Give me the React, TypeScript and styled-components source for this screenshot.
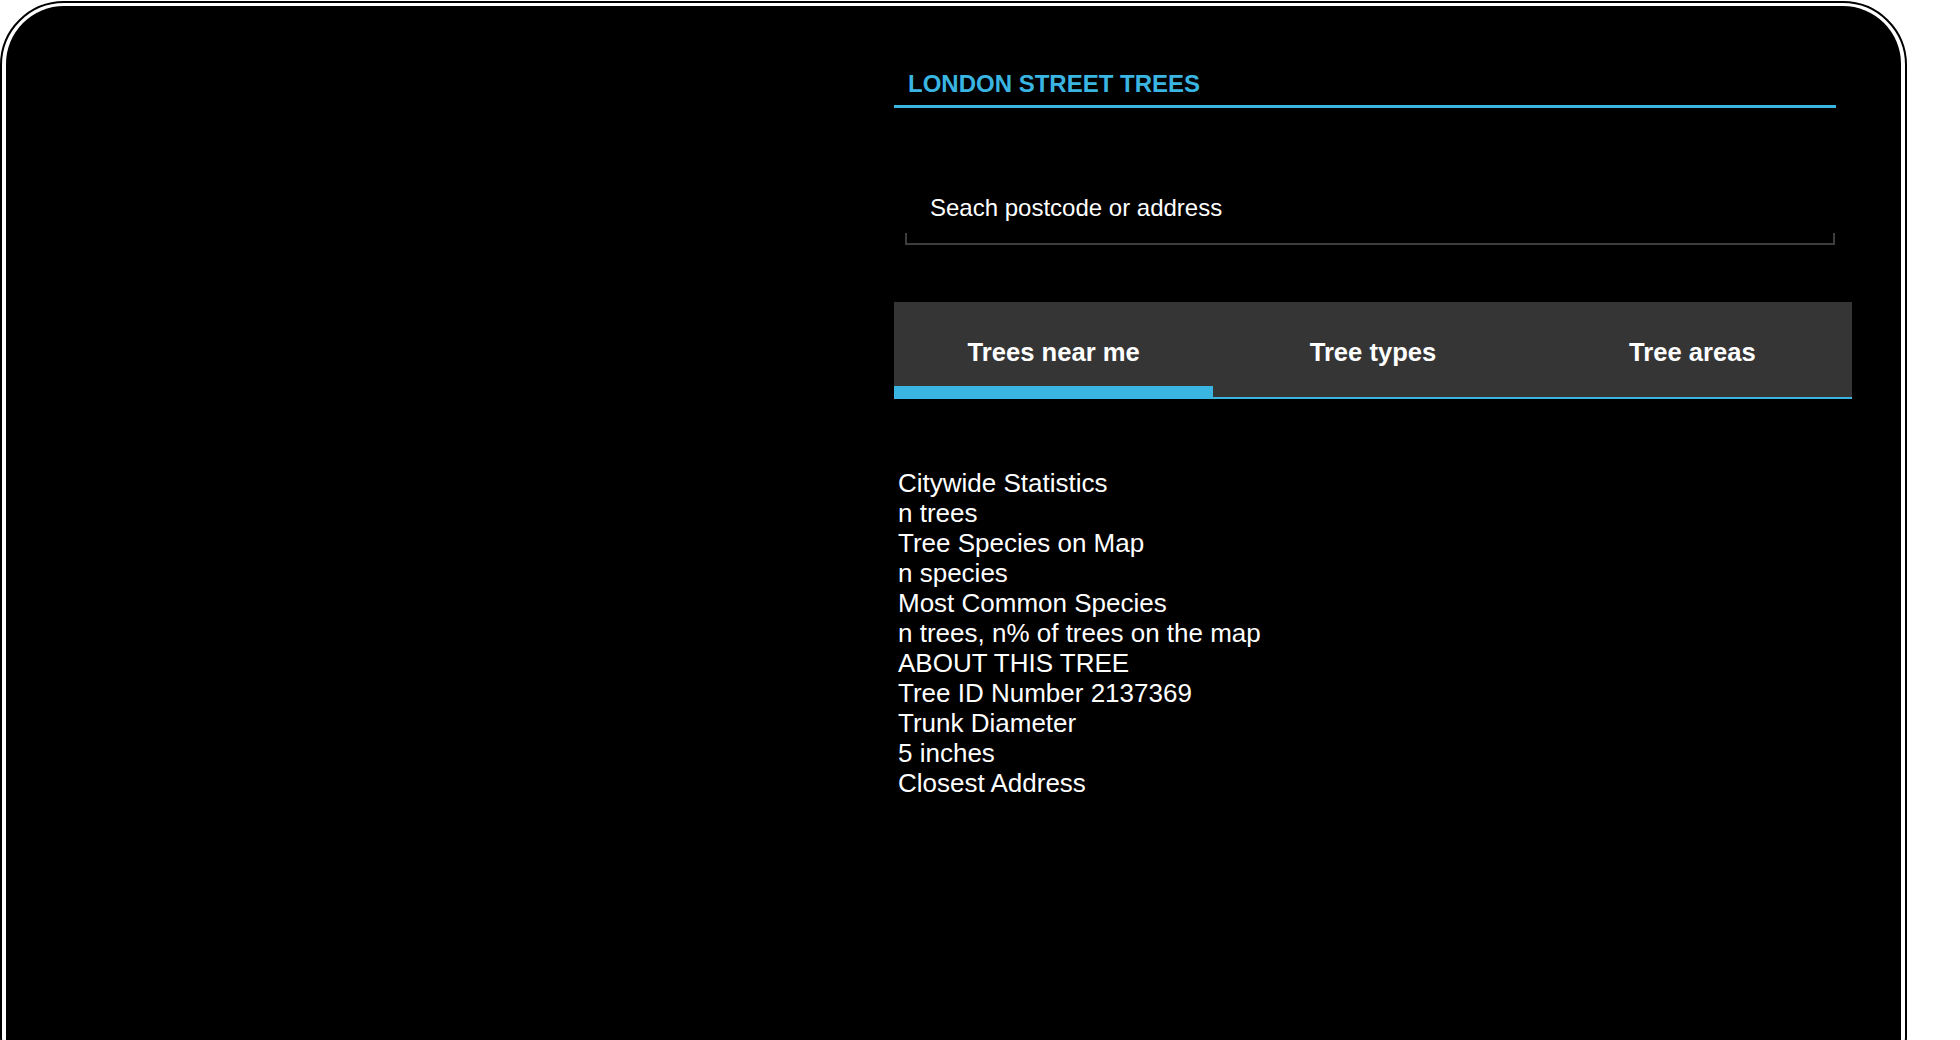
import styled, { createGlobalStyle } from 'styled-components'

const GlobalStyle = createGlobalStyle`
  html, body {
    margin: 0;
    padding: 0;
    background: #fff;
    overflow: hidden;
  }
  body {
    font-family: "Liberation Sans", Arial, sans-serif;
  }
`

const BLUE = '#3ab5e2'

const Device = styled.div`
  box-sizing: border-box;
  width: 1907px;
  height: 1100px;
  margin-top: 1px;
  padding: 3px 4px 0;
  border: 2px solid #000;
  border-radius: 64px;
  background: #fff;
`

const Screen = styled.div`
  height: 100%;
  background: #000;
  border-radius: 58px;
  display: grid;
  grid-template-columns: 888px 958px 1fr;
`

const MapArea = styled.div``

const Sidebar = styled.aside`
  padding-top: 64px;
  color: #fff;
`

const Title = styled.h1`
  margin: 0 16px 0 0;
  padding: 0 0 7px 14px;
  font-size: 24px;
  line-height: 28px;
  font-weight: 700;
  color: ${BLUE};
  border-bottom: 3px solid ${BLUE};
`

const SearchBox = styled.div`
  margin: 86px 17px 0 11px;
`

const SearchText = styled.div`
  padding-left: 25px;
  font-size: 24px;
  line-height: 28px;
  color: #fff;
`

const SearchUnderline = styled.div`
  margin-top: 11px;
  height: 10px;
  border: 2px solid #3d3d3d;
  border-top: none;
`

const TabBar = styled.nav`
  display: flex;
  margin-top: 57px;
  height: 95px;
  background: #353535;
  border-bottom: 2px solid ${BLUE};
`

const Tab = styled.div<{ active?: boolean }>`
  flex: 1 1 0;
  display: flex;
  align-items: center;
  justify-content: center;
  padding-top: 5px;
  font-size: 25.6px;
  font-weight: 700;
  color: #fff;
  box-shadow: ${props => props.active ? `inset 0 -11px 0 ${BLUE}` : 'none'};
`

const Stats = styled.div`
  margin-top: 69px;
  padding-left: 4px;
  font-size: 26px;
  line-height: 30px;
`

const StatLine = styled.div``

const lines = [
  'Citywide Statistics',
  'n trees',
  'Tree Species on Map',
  'n species',
  'Most Common Species',
  'n trees, n% of trees on the map',
  'ABOUT THIS TREE',
  'Tree ID Number 2137369',
  'Trunk Diameter',
  '5 inches',
  'Closest Address',
]

const tabs = ['Trees near me', 'Tree types', 'Tree areas']

export default function App() {
  return (
    <>
      <GlobalStyle />
      <Device>
        <Screen>
          <MapArea />
          <Sidebar>
            <Title>LONDON STREET TREES</Title>
            <SearchBox>
              <SearchText>Seach postcode or address</SearchText>
              <SearchUnderline />
            </SearchBox>
            <TabBar>
              {tabs.map((t, i) => (
                <Tab key={t} active={i === 0}>{t}</Tab>
              ))}
            </TabBar>
            <Stats>
              {lines.map(l => (
                <StatLine key={l}>{l}</StatLine>
              ))}
            </Stats>
          </Sidebar>
        </Screen>
      </Device>
    </>
  )
}
